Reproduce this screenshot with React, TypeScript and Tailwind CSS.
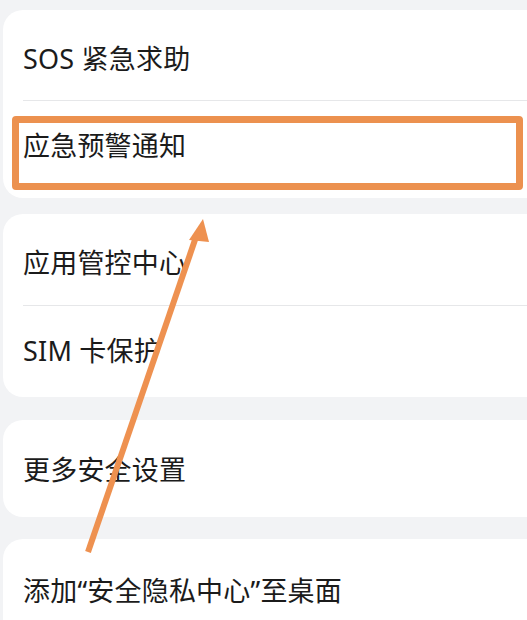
import React from "react";

const rowText = "text-[27px] leading-none text-[#1b1b1b] tracking-[0.2px]";

function Card({ items, className }: { items: { label: string; h: string }[]; className?: string }) {
  return (
    <section className={`ml-[3px] -mr-[30px] rounded-[20px] bg-white ${className ?? ""}`}>
      {items.map((it, i) => (
        <div key={it.label}>
          {i > 0 && <div className="ml-[20px] h-px bg-[#e6e7e9]" />}
          <div className={`flex items-center pl-[20px] ${it.h}`}>
            <span className={rowText}>{it.label}</span>
          </div>
        </div>
      ))}
    </section>
  );
}

export default function App() {
  return (
    <div
      className="relative h-[620px] w-[527px] overflow-hidden bg-[#f2f3f5]"
      style={{ fontFamily: '"Noto Sans", "Noto Sans CJK SC", sans-serif' }}
    >
      <div className="flex flex-col pt-[10px]">
        <Card
          items={[
            { label: "SOS 紧急求助", h: "h-[90px] pt-[6px]" },
            { label: "应急预警通知", h: "h-[97px] pb-[8px]" },
          ]}
        />
        <Card
          className="mt-[16px]"
          items={[
            { label: "应用管控中心", h: "h-[91px] pt-[6px]" },
            { label: "SIM 卡保护", h: "h-[91px] pb-[2px]" },
          ]}
        />
        <Card className="mt-[23px]" items={[{ label: "更多安全设置", h: "h-[97px] pt-[2px]" }]} />
        <Card className="mt-[22px]" items={[{ label: "添加“安全隐私中心”至桌面", h: "h-[100px] pt-[2px]" }]} />
      </div>

      {/* highlight box */}
      <div className="absolute left-[12px] top-[116px] h-[74px] w-[511px] rounded-[4px] border-[7px] border-[#ec914f]" />

      {/* arrow */}
      <svg className="pointer-events-none absolute left-0 top-0" width="527" height="620" viewBox="0 0 527 620">
        <line x1="88" y1="552" x2="197" y2="234" stroke="#ee9150" strokeWidth="6" strokeLinecap="butt" />
        <polygon points="203,219 189,240 209,242" fill="#ee9150" />
      </svg>
    </div>
  );
}
